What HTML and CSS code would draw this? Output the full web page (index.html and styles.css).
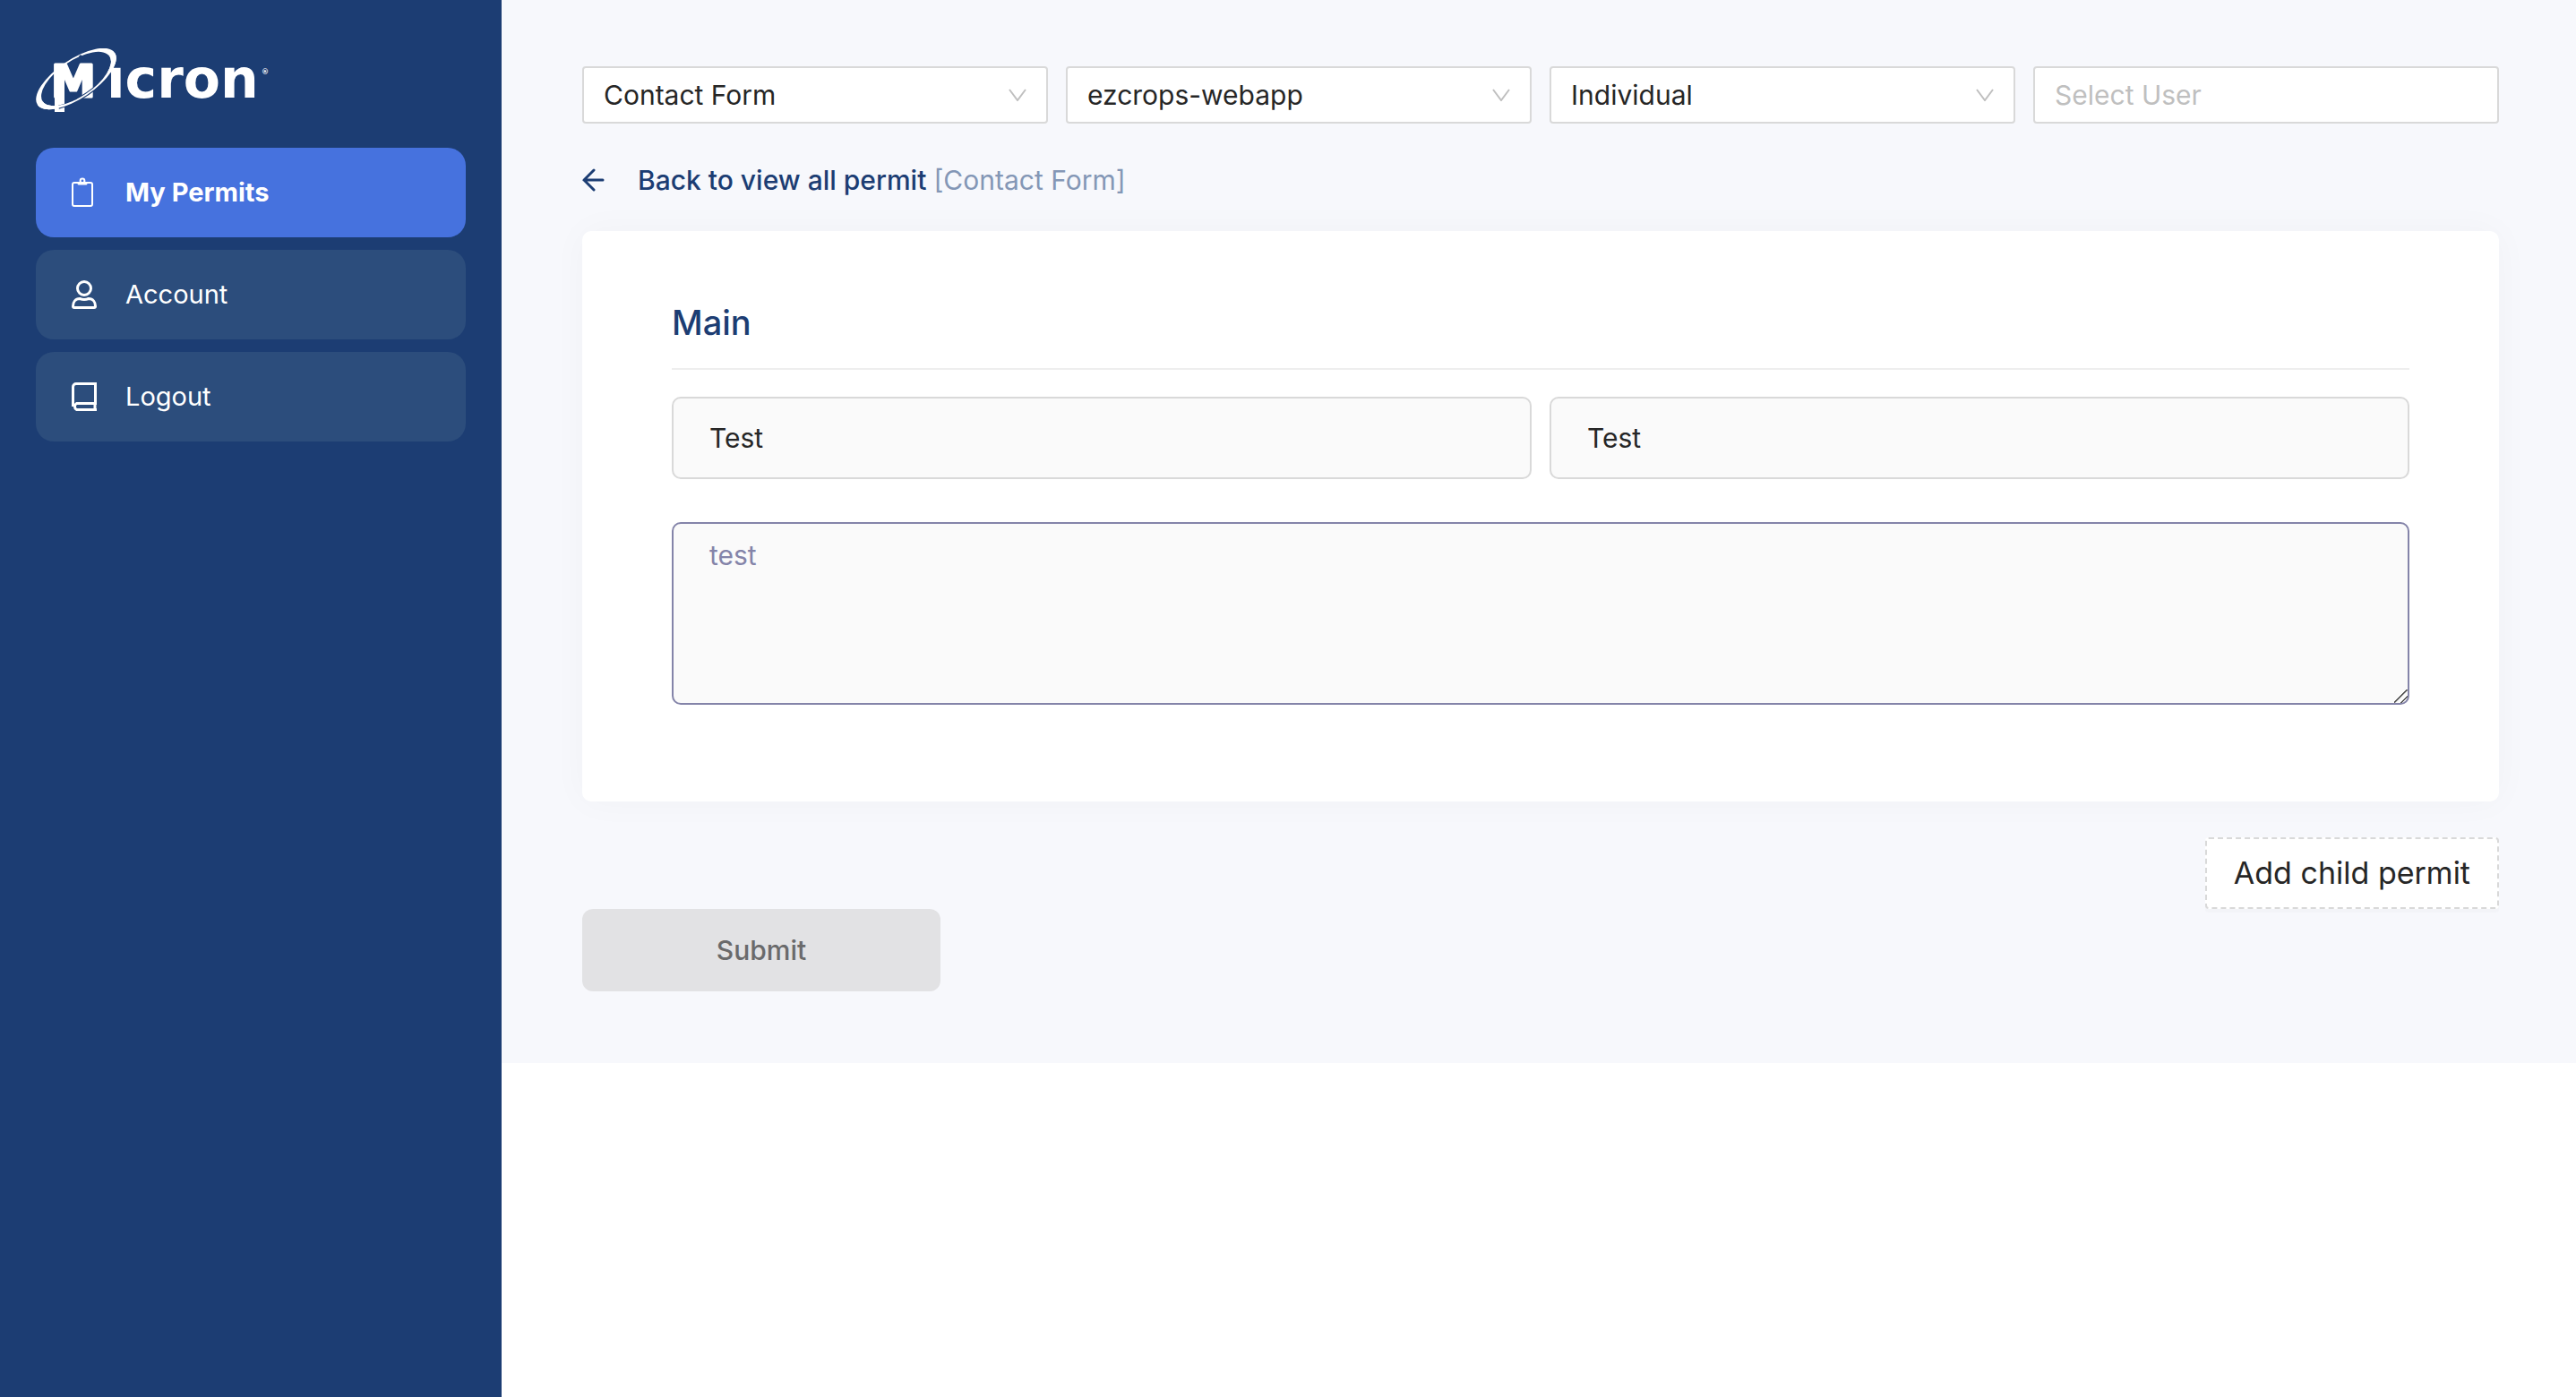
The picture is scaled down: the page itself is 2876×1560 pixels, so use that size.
FILE: index.html
```html
<!doctype html>
<html lang="en">
  <head>
    <meta charset="UTF-8" />
    <meta name="viewport" content="width=device-width, initial-scale=1.0" />
    <title>My Permits</title>
    <link rel="stylesheet" href="styles.css">
  </head>

  <body>
    <div id="app">
      <aside class="sidebar">
        <a class="logo" href="#" aria-label="Micron">
          <svg width="260" height="72" viewBox="0 0 260 72">
            <g transform="translate(45 34) rotate(-34)">
              <path fill="#fff" fill-rule="evenodd" d="M-52 0a52 21.7 0 1 0 104 0a52 21.7 0 1 0-104 0z M-45 0a45 20 0 1 0 90 0a45 20 0 1 0-90 0z" />
            </g>
            <text class="logo-text logo-m" x="17" y="54" font-size="50">M</text>
            <rect x="21" y="26" width="11" height="45" fill="#fff" />
            <g transform="translate(45 34) rotate(-34)">
              <path fill="none" stroke="#1c3d73" stroke-width="4" d="M-34 15.400A51 21 0 0 0 36 15" />
              <path fill="#fff" d="M-52 0A52 21.700 0 0 0 52 0L45 0A45 20 0 0 1-45 0z" />
            </g>
            <path stroke="#1c3d73" stroke-width="3" d="M49 8l5 6M41 51l4 6" />
            <text class="logo-text" x="79" y="55" font-size="60">ıcron</text>
            <text class="logo-text" x="252" y="29" font-size="8">®</text>
          </svg>
        </a>
        <nav class="menu">
          <a class="menu-item active" href="#">
            <svg class="menu-icon" width="28" height="34" viewBox="0 0 28 34" fill="none" stroke="#fff" stroke-width="2">
              <rect x="1" y="6" width="22" height="26" rx="2" />
              <circle cx="12" cy="4" r="2.4" />
              <path stroke-width="3" stroke-linecap="round" d="M8 7h8" />
            </svg>
            My Permits
          </a>
          <a class="menu-item" href="#">
            <svg class="menu-icon" width="28" height="34" viewBox="0 0 28 34" fill="none" stroke="#fff" stroke-width="3">
              <circle cx="14" cy="10" r="7.5" />
              <path d="M9 21.5c3 1.200 7 1.200 10 0c5 0 7.500 4 7.500 8.500c0 1-.5 1.500-1.500 1.500H3c-1 0-1.500-.5-1.500-1.500C1.500 25.500 4 21.500 9 21.500z" />
            </svg>
            Account
          </a>
          <a class="menu-item" href="#">
            <svg class="menu-icon" width="28" height="34" viewBox="0 0 28 34" fill="none" stroke="#fff" stroke-width="3">
              <path d="M28 31.500H5.500a4 4 0 0 1 0-7H26.500V2.500H5a3.500 3.500 0 0 0-3.500 3.500V28M26 24.500v7" />
            </svg>
            Logout
          </a>
        </nav>
      </aside>

      <main class="content">
        <section class="page">
          <div class="filters">
            <div class="select">
              <select aria-label="Form">
                <option>Contact Form</option>
              </select>
              <svg class="select-arrow" width="20" height="14" viewBox="0 0 20 14"><path d="M1 1l9 12l9-12" /></svg>
            </div>
            <div class="select">
              <select aria-label="Application">
                <option>ezcrops-webapp</option>
              </select>
              <svg class="select-arrow" width="20" height="14" viewBox="0 0 20 14"><path d="M1 1l9 12l9-12" /></svg>
            </div>
            <div class="select">
              <select aria-label="Type">
                <option>Individual</option>
              </select>
              <svg class="select-arrow" width="20" height="14" viewBox="0 0 20 14"><path d="M1 1l9 12l9-12" /></svg>
            </div>
            <div class="select">
              <input type="text" placeholder="Select User" aria-label="Select User" />
            </div>
          </div>

          <a class="back" href="#">
            <svg width="26" height="26" viewBox="0 0 26 26"><path d="M23 13H2M13 2L2 13l11 11" /></svg>
            <span>Back to view all permit <span class="back-name">[Contact Form]</span></span>
          </a>

          <form>
            <div class="card">
              <h2 class="card-title">Main</h2>
              <div class="fields">
                <input class="field" type="text" value="Test" aria-label="Test 1" />
                <input class="field" type="text" value="Test" aria-label="Test 2" />
                <textarea class="field field-area" placeholder="test" aria-label="Test 3"></textarea>
              </div>
            </div>

            <div class="add-row">
              <button class="button button-dashed" type="button">Add child permit</button>
            </div>
            <button class="button button-submit" type="submit" disabled>Submit</button>
          </form>
        </section>
      </main>
    </div>
  </body>
</html>
```
FILE: styles.css
```css
* {
  box-sizing: border-box;
}

body {
  margin: 0;
  background-color: #fff;
  color: #262626;
  font-family: Inter, sans-serif;
  font-size: 30px;
  line-height: 42px;
}

a {
  color: inherit;
  text-decoration: none;
}

input,
select,
textarea,
button {
  font: inherit;
  color: inherit;
  margin: 0;
}

#app {
  display: flex;
  min-height: 100vh;
}

.sidebar {
  flex: 0 0 560px;
  padding: 54px 40px;
  background-color: #1c3d73;
  color: #fff;
}

.logo {
  display: block;
  height: 72px;
  margin-bottom: 39px;
}

.logo svg {
  display: block;
}

.logo-text {
  fill: #fff;
  font-family: "DejaVu Sans", sans-serif;
  font-weight: bold;
}

.logo-m {
  stroke: #fff;
  stroke-width: 3;
  stroke-linejoin: round;
}

.menu {
  display: flex;
  flex-direction: column;
  gap: 14px;
}

.menu-item {
  display: flex;
  align-items: center;
  gap: 32px;
  height: 100px;
  padding: 0 40px;
  border-radius: 20px;
  background-color: #2c4d7c;
  font-size: 29px;
}

.menu-item.active {
  background-color: #4672de;
  font-weight: 700;
}

.content {
  flex: 1;
}

.page {
  padding: 74px 86px 80px 90px;
  background-color: #f7f8fc;
}

.filters {
  display: grid;
  grid-template-columns: repeat(4, 1fr);
  gap: 20px;
}

.select {
  position: relative;
}

.select select,
.select input {
  display: block;
  width: 100%;
  height: 64px;
  padding: 0 22px;
  appearance: none;
  background-color: #fff;
  border: 2px solid #d9d9d9;
  border-radius: 4px;
}

.select input::placeholder {
  color: #bfbfbf;
}

.select-arrow {
  position: absolute;
  top: 25px;
  right: 24px;
  fill: none;
  stroke: #bfbfbf;
  stroke-width: 2;
  pointer-events: none;
}

.back {
  display: flex;
  align-items: center;
  gap: 36px;
  margin: 42px 0 36px;
  color: #1c3d73;
  font-weight: 500;
}

.back svg {
  fill: none;
  stroke: #1c3d73;
  stroke-width: 3;
  stroke-linecap: round;
}

.back-name {
  color: #8497b6;
  font-weight: 400;
}

.card {
  padding: 76px 100px 108px;
  background-color: #fff;
  border-radius: 10px;
  box-shadow: 0 0 40px rgba(0, 0, 0, 0.03);
}

.card-title {
  margin: 0 0 30px;
  padding-bottom: 25px;
  border-bottom: 2px solid #eee;
  color: #1c3d73;
  font-size: 38px;
  font-weight: 500;
  line-height: 52px;
}

.fields {
  display: grid;
  grid-template-columns: 1fr 1fr;
  gap: 48px 20px;
}

.field {
  width: 100%;
  height: 92px;
  padding: 0 40px;
  background-color: #fafafa;
  border: 2px solid #d9d9d9;
  border-radius: 10px;
}

.field-area {
  grid-column: 1 / -1;
  display: block;
  height: 204px;
  padding: 14px 40px;
  border-color: #8484a9;
}

.field-area::placeholder {
  color: #8484a9;
}

/* two diagonal grip lines */
.field-area::-webkit-resizer {
  background: linear-gradient(
    135deg,
    transparent 44%,
    #555 46%,
    #555 52%,
    transparent 54%,
    transparent 70%,
    #555 72%,
    #555 78%,
    transparent 80%
  );
}

.add-row {
  display: flex;
  justify-content: flex-end;
  margin-top: 40px;
}

.button {
  cursor: pointer;
}

.button-dashed {
  height: 80px;
  padding: 0 30px;
  background-color: #fff;
  border: 2px dashed #d9d9d9;
  border-radius: 4px;
  box-shadow: 0 4px 0 rgba(0, 0, 0, 0.016);
  font-size: 34px;
}

.button-submit {
  display: block;
  width: 400px;
  height: 92px;
  border: none;
  border-radius: 12px;
  background-color: #e2e2e4;
  color: #6a6a6b;
  font-weight: 500;
}
```
